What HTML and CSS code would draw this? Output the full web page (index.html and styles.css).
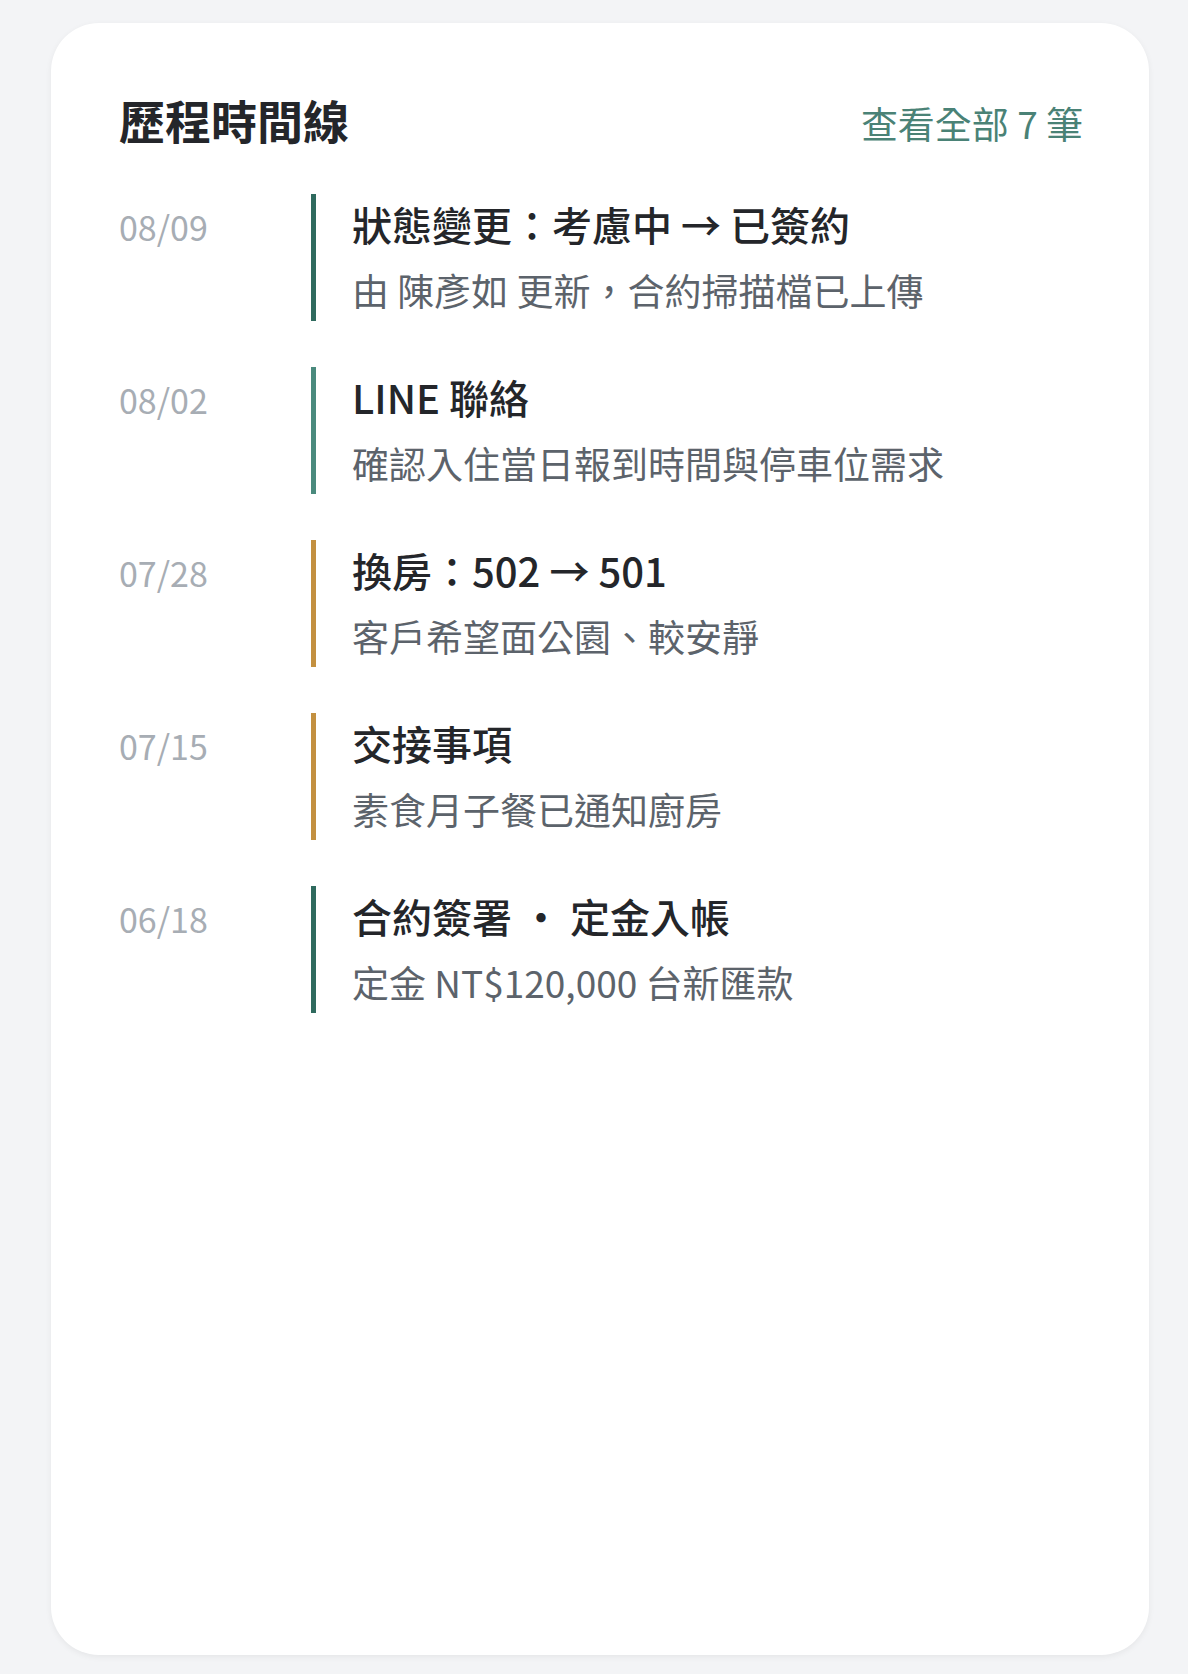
FILE: index.html
```html
<!DOCTYPE html>
<html lang="zh-Hant">
<head>
  <meta charset="UTF-8" />
  <meta name="viewport" content="width=device-width, initial-scale=1" />
  <title>歷程時間線</title>
  <link rel="stylesheet" href="styles.css">
</head>
<body>

  <!-- 歷程卡片 -->
  <section class="card">
    <div class="card-head">
      <h2 class="card-title">歷程時間線</h2>
      <a class="view-all" href="#">查看全部 7 筆</a>
    </div>

    <ul class="timeline">
      <li class="event">
        <span class="event-date">08/09</span>
        <div class="event-body tone-dark">
          <p class="event-title">狀態變更：考慮中 → 已簽約</p>
          <p class="event-note">由 陳彥如 更新，合約掃描檔已上傳</p>
        </div>
      </li>
      <li class="event">
        <span class="event-date">08/02</span>
        <div class="event-body tone-teal">
          <p class="event-title">LINE 聯絡</p>
          <p class="event-note">確認入住當日報到時間與停車位需求</p>
        </div>
      </li>
      <li class="event">
        <span class="event-date">07/28</span>
        <div class="event-body tone-gold">
          <p class="event-title">換房：502 → 501</p>
          <p class="event-note">客戶希望面公園、較安靜</p>
        </div>
      </li>
      <li class="event">
        <span class="event-date">07/15</span>
        <div class="event-body tone-gold">
          <p class="event-title">交接事項</p>
          <p class="event-note">素食月子餐已通知廚房</p>
        </div>
      </li>
      <li class="event">
        <span class="event-date">06/18</span>
        <div class="event-body tone-dark">
          <p class="event-title">合約簽署 ・ 定金入帳</p>
          <p class="event-note">定金 NT$120,000 台新匯款</p>
        </div>
      </li>
    </ul>
  </section>

</body>
</html>
```

FILE: styles.css
```css
* {
  box-sizing: border-box;
}

html,
body {
  height: 100%;
}

body {
  margin: 0;
  padding: 23px 39px 19px 51px;
  background-color: #f3f4f6;
  font-family: "Noto Sans CJK TC", "Noto Sans", sans-serif;
  color: #24262a;
}

.card {
  height: 100%;
  padding: 64px 66px 64px 68px;
  background: #fff;
  border-radius: 48px;
  box-shadow: 0 2px 6px rgba(0, 0, 0, 0.06);
}

.card-head {
  display: flex;
  justify-content: space-between;
  align-items: baseline;
}

.card-title {
  margin: 0;
  font-size: 46px;
  line-height: 64px;
  font-weight: 700;
  color: #24262a;
}

.view-all {
  font-size: 37px;
  color: #4a8276;
  text-decoration: none;
}

.timeline {
  list-style: none;
  margin: 43px 0 0;
  padding: 0;
}

.event {
  display: flex;
  margin-bottom: 46px;
}

.event-date {
  width: 192px;
  flex-shrink: 0;
  padding-top: 3px;
  font-size: 34px;
  line-height: 60px;
  color: #a7adb4;
}

.event-body {
  padding: 0 0 2px 36px;
  border-left: 5px solid #2f6a5e;
}

.tone-dark {
  border-left-color: #2f6a5e;
}

.tone-teal {
  border-left-color: #4a8a7d;
}

.tone-gold {
  border-left-color: #c39040;
}

.event-title {
  margin: 0 0 7px;
  font-size: 40px;
  line-height: 60px;
  font-weight: 500;
  color: #24262a;
}

.event-note {
  margin: 0;
  font-size: 37px;
  line-height: 58px;
  color: #5c636b;
}
```
